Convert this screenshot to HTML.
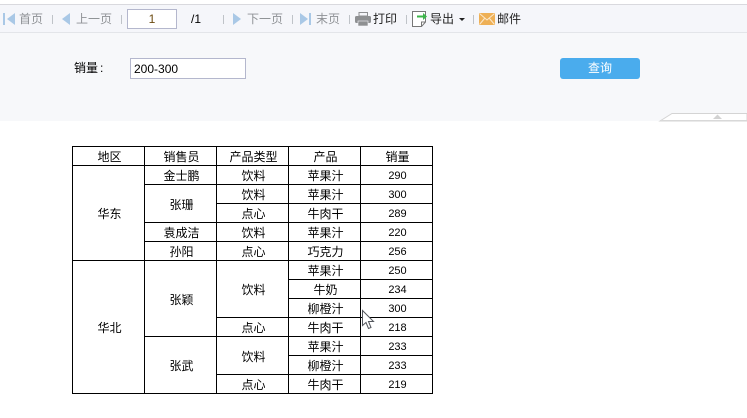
<!DOCTYPE html>
<html lang="zh">
<head>
<meta charset="utf-8">
<title>报表</title>
<style>
html,body{margin:0;padding:0;background:#fff}
body{position:relative;width:747px;height:418px;overflow:hidden;font:12px/16px "Liberation Sans","WenQuanYi Zen Hei","Noto Sans CJK SC",sans-serif;color:#000}
.a{position:absolute}
.top{left:0;top:5px;width:747px;height:27px;background:#f5f6fa;border-top:1px solid #d9d9de;border-bottom:1px solid #e3e5e9;box-sizing:content-box;margin-top:-1px}
.form{left:0;top:33px;width:747px;height:88px;background:#f7f8fa}
.t{position:absolute;top:11px;white-space:nowrap;line-height:16px}
.g{color:#8f9296}
.d{color:#222}
.s{position:absolute;top:15px;width:1px;height:9px;background:#bfc3c8}
svg{position:absolute;overflow:visible}
input{position:absolute;box-sizing:border-box;border:1px solid #b4b7cd;background:#fff;font:12px "Liberation Sans",sans-serif;padding:0;margin:0;outline:0;color:#000}
.btn{left:560px;top:58px;width:80px;height:21px;background:#4aaced;border-radius:3px;color:#fff;text-align:center;line-height:21px}
table{position:absolute;left:72px;top:146px;width:361px;border-collapse:collapse;table-layout:fixed;font-family:"WenQuanYi Zen Hei","Liberation Sans",sans-serif;font-size:12px}
td{border:1px solid #000;padding:2px 0 0 2px;height:16px;line-height:16px;text-align:center;overflow:hidden}
td.n{font-family:"Liberation Sans",sans-serif;font-size:11px}
</style>
</head>
<body>
<div class="a top"></div>
<div class="a form"></div>

<svg style="left:0;top:0" width="20" height="32"><rect x="3" y="13" width="2" height="12" fill="#a9c8e6"/><path d="M15 13V25L7 19Z" fill="#a9c8e6"/></svg>
<span class="t g" style="left:19px;font-family:'WenQuanYi Zen Hei',sans-serif">首页</span>
<div class="s" style="left:52px"></div>
<svg style="left:0;top:0" width="80" height="32"><path d="M70 13V25L62 19Z" fill="#a9c8e6"/></svg>
<span class="t g" style="left:76px;font-family:'WenQuanYi Zen Hei',sans-serif">上一页</span>
<div class="s" style="left:121px"></div>
<input style="left:127px;top:9px;width:50px;height:20px;text-align:center;color:#6b4a10" value="1">
<span class="t" style="left:191px">/1</span>
<div class="s" style="left:223px"></div>
<svg style="left:0;top:0" width="250" height="32"><path d="M233 13V25L241 19Z" fill="#a9c8e6"/></svg>
<span class="t g" style="left:247px;font-family:'WenQuanYi Zen Hei',sans-serif">下一页</span>
<div class="s" style="left:292px"></div>
<svg style="left:0;top:0" width="320" height="32"><path d="M300 13V25L308 19Z" fill="#a9c8e6"/><rect x="309" y="13" width="2" height="12" fill="#a9c8e6"/></svg>
<span class="t g" style="left:316px;font-family:'WenQuanYi Zen Hei',sans-serif">末页</span>
<div class="s" style="left:349px"></div>
<svg style="left:0;top:0" width="375" height="32"><path d="M359 12.500H367.500V16H359Z" fill="none" stroke="#8e9092"/><rect x="355" y="16" width="16" height="7" rx="1.500" fill="#8e9092"/><rect x="358" y="21" width="10" height="5" fill="#8e9092" stroke="#f5f6fa" stroke-width=".6"/></svg>
<span class="t d" style="left:373px;font-family:'WenQuanYi Zen Hei',sans-serif">打印</span>
<div class="s" style="left:406px"></div>
<svg style="left:0;top:0" width="430" height="32"><path d="M412.500 11.500H425.500V22L421.500 26.500H412.500Z" fill="#fff" stroke="#777"/><path d="M421.500 26V22H425.500" fill="none" stroke="#777"/><path d="M417 15.500H423V13L427 16.500 423 20V17.500H417Z" fill="#3cb54a"/></svg>
<span class="t d" style="left:430px;font-family:'WenQuanYi Zen Hei',sans-serif">导出</span>
<svg style="left:0;top:0" width="470" height="32"><path d="M459 18H465L462 21Z" fill="#222"/></svg>
<div class="s" style="left:473px"></div>
<svg style="left:0;top:0" width="497" height="32"><rect x="479" y="13" width="16" height="12" fill="#eeb056"/><path d="M479.500 13.500L487 20 494.500 13.500M479.500 24.500L484.500 18.500M494.500 24.500L489.500 18.500" fill="none" stroke="#fbe9cd"/></svg>
<span class="t d" style="left:497px;font-family:'WenQuanYi Zen Hei',sans-serif">邮件</span>

<span class="a" style="left:74px;top:60px;font-family:'WenQuanYi Zen Hei',sans-serif">销量<span style="margin-left:2px">:</span></span>
<input style="left:130px;top:58px;width:116px;height:21px;padding-left:3px" value="200-300">
<div class="a btn" style="font-family:'WenQuanYi Zen Hei',sans-serif">查询</div>

<svg style="left:0;top:0" width="747" height="122"><path d="M660 121L672 113.500H747V121Z" fill="#fff" stroke="#d4d4d4"/><path d="M713 119L717.500 114.500 722 119Z" fill="#d2d2d2"/><rect x="660" y="120" width="87" height="1" fill="#d8d8d8"/></svg>

<table>
<colgroup><col style="width:72px"><col style="width:72px"><col style="width:72px"><col style="width:72px"><col style="width:72px"></colgroup>
<tr><td>地区</td><td>销售员</td><td>产品类型</td><td>产品</td><td>销量</td></tr>
<tr><td rowspan="5">华东</td><td>金士鹏</td><td>饮料</td><td>苹果汁</td><td class="n">290</td></tr>
<tr><td rowspan="2">张珊</td><td>饮料</td><td>苹果汁</td><td class="n">300</td></tr>
<tr><td>点心</td><td>牛肉干</td><td class="n">289</td></tr>
<tr><td>袁成洁</td><td>饮料</td><td>苹果汁</td><td class="n">220</td></tr>
<tr><td>孙阳</td><td>点心</td><td>巧克力</td><td class="n">256</td></tr>
<tr><td rowspan="7">华北</td><td rowspan="4">张颖</td><td rowspan="3">饮料</td><td>苹果汁</td><td class="n">250</td></tr>
<tr><td>牛奶</td><td class="n">234</td></tr>
<tr><td>柳橙汁</td><td class="n">300</td></tr>
<tr><td>点心</td><td>牛肉干</td><td class="n">218</td></tr>
<tr><td rowspan="3">张武</td><td rowspan="2">饮料</td><td>苹果汁</td><td class="n">233</td></tr>
<tr><td>柳橙汁</td><td class="n">233</td></tr>
<tr><td>点心</td><td>牛肉干</td><td class="n">219</td></tr>
</table>

<svg style="left:0;top:0" width="380" height="335"><path d="M362.500 310.500V325.500L366 322.500 368.500 328.500 371 327.500 368.500 321.500H373.500Z" fill="#fff" stroke="#55585e"/></svg>
</body>
</html>
